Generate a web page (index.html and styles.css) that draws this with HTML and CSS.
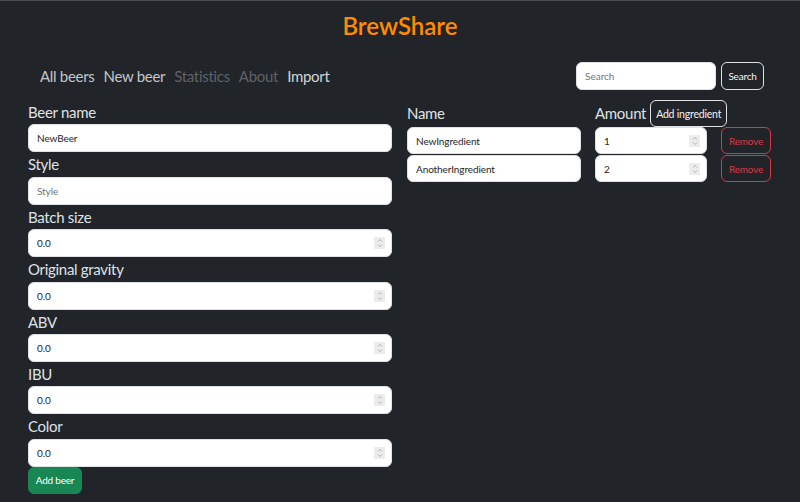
FILE: index.html
```
<!DOCTYPE html>
<html lang="en">
<head>
<meta charset="utf-8">
<title>BrewShare</title>
<link rel="stylesheet" href="styles.css">
</head>
<body>
<header class="top">
  <h1 class="brand">BrewShare</h1>
  <div class="navrow">
    <nav class="nav">
      <a class="nav-link">All beers</a>
      <a class="nav-link">New beer</a>
      <a class="nav-link muted">Statistics</a>
      <a class="nav-link muted">About</a>
      <a class="nav-link bright">Import</a>
    </nav>
    <form class="search">
      <input class="search-input" type="text" placeholder="Search">
      <button class="btn btn-outline btn-search" type="button">Search</button>
    </form>
  </div>
</header>
<main class="main">
  <section class="beer-form">
    <label class="label">Beer name</label>
    <input class="control" type="text" value="NewBeer">
    <label class="label">Style</label>
    <input class="control" type="text" placeholder="Style">
    <label class="label">Batch size</label>
    <div class="field"><input class="control" type="number" value="0.0"><span class="spin"><svg viewBox="0 0 10 12" width="10" height="12"><path d="M3 4.5 5 2.5 7 4.5M3 7.5 5 9.5 7 7.5" fill="none" stroke="#a3a6a9" stroke-width="0.9"/></svg></span></div>
    <label class="label">Original gravity</label>
    <div class="field"><input class="control" type="number" value="0.0"><span class="spin"><svg viewBox="0 0 10 12" width="10" height="12"><path d="M3 4.5 5 2.5 7 4.5M3 7.5 5 9.5 7 7.5" fill="none" stroke="#a3a6a9" stroke-width="0.9"/></svg></span></div>
    <label class="label">ABV</label>
    <div class="field"><input class="control" type="number" value="0.0"><span class="spin"><svg viewBox="0 0 10 12" width="10" height="12"><path d="M3 4.5 5 2.5 7 4.5M3 7.5 5 9.5 7 7.5" fill="none" stroke="#a3a6a9" stroke-width="0.9"/></svg></span></div>
    <label class="label">IBU</label>
    <div class="field"><input class="control" type="number" value="0.0"><span class="spin"><svg viewBox="0 0 10 12" width="10" height="12"><path d="M3 4.5 5 2.5 7 4.5M3 7.5 5 9.5 7 7.5" fill="none" stroke="#a3a6a9" stroke-width="0.9"/></svg></span></div>
    <label class="label">Color</label>
    <div class="field"><input class="control" type="number" value="0.0"><span class="spin"><svg viewBox="0 0 10 12" width="10" height="12"><path d="M3 4.5 5 2.5 7 4.5M3 7.5 5 9.5 7 7.5" fill="none" stroke="#a3a6a9" stroke-width="0.9"/></svg></span></div>
    <div class="actions"><button class="btn btn-success" type="button">Add beer</button></div>
  </section>
  <section class="ingredients">
    <div class="ing-head">Name</div>
    <div class="ing-head amount-head">Amount <button class="btn btn-outline btn-add" type="button">Add ingredient</button></div>
    <div></div>
    <input class="control" type="text" value="NewIngredient">
    <div class="field"><input class="control" type="number" value="1"><span class="spin"><svg viewBox="0 0 10 12" width="10" height="12"><path d="M3 4.5 5 2.5 7 4.5M3 7.5 5 9.5 7 7.5" fill="none" stroke="#a3a6a9" stroke-width="0.9"/></svg></span></div>
    <button class="btn btn-danger" type="button">Remove</button>
    <input class="control" type="text" value="AnotherIngredient">
    <div class="field"><input class="control" type="number" value="2"><span class="spin"><svg viewBox="0 0 10 12" width="10" height="12"><path d="M3 4.5 5 2.5 7 4.5M3 7.5 5 9.5 7 7.5" fill="none" stroke="#a3a6a9" stroke-width="0.9"/></svg></span></div>
    <button class="btn btn-danger" type="button">Remove</button>
  </section>
</main>
</body>
</html>
```
FILE: styles.css
```
* { box-sizing: border-box; }
html, body { margin: 0; height: 100%; }
body {
  background: #212529;
  border-top: 1px solid #4b4f54;
  font-family: Lato, "Open Sans", sans-serif;
  color: #dee2e6;
}
.brand {
  margin: 0;
  padding-top: 10px;
  height: 61px;
  text-align: center;
  font-size: 24px;
  line-height: 30px;
  font-weight: 600;
  color: #ff8c00;
}
.navrow {
  display: flex;
  align-items: center;
  justify-content: space-between;
  padding: 0 36px 0 40px;
  height: 28px;
}
.nav { display: flex; gap: 9px; }
.nav-link {
  font-size: 15px;
  letter-spacing: -0.3px;
  color: #c3c6c9;
  text-decoration: none;
}
.nav-link.muted { color: #5e6267; }
.nav-link.bright { color: #d3d5d8; }
.search { display: flex; gap: 5px; }
.search-input {
  width: 140px;
  height: 28px;
  border: 1px solid #dee2e6;
  border-radius: 6px;
  padding: 0 8px;
  font-family: inherit;
  font-size: 10px;
  color: #212529;
  background: #fff;
}
.search-input::placeholder { color: #6c757d; }
.btn {
  font-family: inherit;
  font-size: 10px;
  letter-spacing: -0.2px;
  height: 28px;
  border-radius: 6px;
  padding: 0 7px;
  cursor: pointer;
  flex-shrink: 0;
  white-space: nowrap;
}
.btn-outline {
  background: transparent;
  border: 1.5px solid #dee2e6;
  color: #f1f3f5;
}
.btn-search { width: 43px; padding: 0; }
.btn-add { width: 77px; padding: 0; font-size: 10.5px; }
.btn-success {
  background: #198754;
  border: 1px solid #198754;
  color: #fff;
  width: 54px;
  height: 27px;
  padding: 0;
}
.btn-danger {
  background: transparent;
  border: 1.5px solid #dc3545;
  color: #dc3545;
  padding: 0;
}
.main {
  display: flex;
  gap: 15px;
  padding: 10px 0 0 28px;
}
.beer-form {
  width: 364px;
  display: flex;
  flex-direction: column;
}
.label {
  display: block;
  font-size: 15px;
  letter-spacing: -0.3px;
  line-height: 24.4px;
  color: #dee2e6;
}
.field { position: relative; }
.control {
  display: block;
  width: 100%;
  height: 28px;
  border: 1px solid #dee2e6;
  border-radius: 6px;
  background: #fff;
  padding: 0 8px;
  font-family: inherit;
  font-size: 10px;
  letter-spacing: -0.1px;
  color: #212529;
  -moz-appearance: textfield;
}
.control::-webkit-inner-spin-button,
.control::-webkit-outer-spin-button { -webkit-appearance: none; margin: 0; }
.control::placeholder { color: #6c757d; }
.spin {
  position: absolute;
  right: 7px;
  top: 50%;
  width: 11px;
  height: 12px;
  margin-top: -6px;
  background: #ececec;
  display: flex;
  align-items: center;
  justify-content: center;
  pointer-events: none;
}
.actions { display: flex; }
.ingredients {
  display: grid;
  grid-template-columns: 174px 112px 50px;
  grid-template-rows: 27px 28px 28px;
  column-gap: 14px;
  align-items: start;
}
.ingredients .control { height: 27px; }
.ingredients .btn-danger { height: 27px; width: 50px; }
.ing-head {
  font-size: 15px;
  letter-spacing: -0.3px;
  line-height: 27px;
  color: #dee2e6;
}
.amount-head {
  display: flex;
  align-items: center;
  gap: 4px;
  white-space: nowrap;
}
.amount-head .btn { height: 27px; }
```
